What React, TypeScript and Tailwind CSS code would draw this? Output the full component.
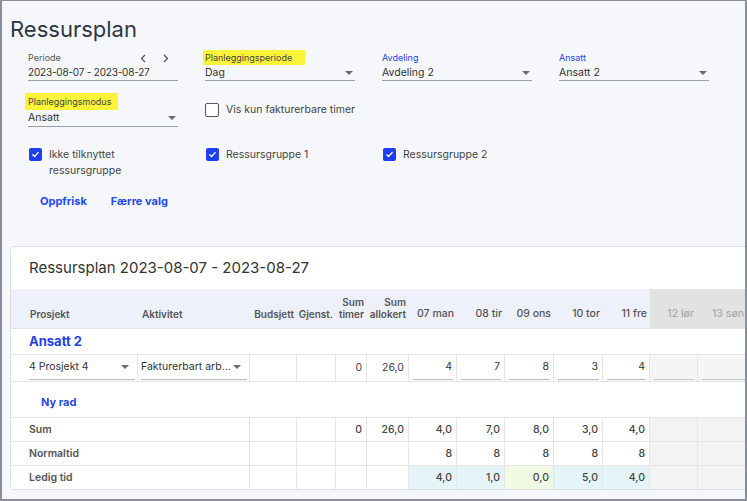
import React from 'react';

const cols = 'grid-cols-[127px_112px_47px_39px_31px_42px_48px_48px_49px_49px_47px_48px_60px]';

function Caret() {
  return (
    <svg width="8" height="4" viewBox="0 0 8 4" className="shrink-0">
      <path d="M0 0h8L4 4z" fill="#6b6b6b" />
    </svg>
  );
}

function Check({ checked }: { checked: boolean }) {
  if (!checked) {
    return <div className="w-[14px] h-[14px] rounded-[2px] border-[1.5px] border-[#5a5a5a] bg-white shrink-0" />;
  }
  return (
    <div className="w-[13px] h-[13px] rounded-[2px] bg-[#1d3fef] flex items-center justify-center shrink-0">
      <svg width="9" height="9" viewBox="0 0 10 10">
        <path d="M2 5.2l2 2 4-4.4" fill="none" stroke="white" strokeWidth="1.4" strokeLinecap="round" strokeLinejoin="round" />
      </svg>
    </div>
  );
}

const days = [
  { h: '07 man', v: '4', sum: '4,0', ledig: '4,0', bg: 'bg-[#e4f4f9]' },
  { h: '08 tir', v: '7', sum: '7,0', ledig: '1,0', bg: 'bg-[#e4f4f9]' },
  { h: '09 ons', v: '8', sum: '8,0', ledig: '0,0', bg: 'bg-[#f2f9e2]' },
  { h: '10 tor', v: '3', sum: '3,0', ledig: '5,0', bg: 'bg-[#e4f4f9]' },
  { h: '11 fre', v: '4', sum: '4,0', ledig: '4,0', bg: 'bg-[#e4f4f9]' },
];

const cell = 'border-r border-b border-[#e3e5e9] flex items-center justify-end pr-[4px] text-[10.5px] text-[#444]';
const wkCell = 'border-r border-b border-[#e3e5e9] bg-[#f3f3f3]';

export default function App() {
  return (
    <div className="w-[747px] h-[501px] overflow-hidden bg-[#f6f7fb] border-l-2 border-t border-r-2 border-b-2 border-[#8a8f9a] font-['Inter',sans-serif] text-[#333]">
      {/* Title */}
      <h1 className="pl-[8px] pt-[14px] h-[49px] text-[22px] leading-[28px] text-[#2e3646]">Ressursplan</h1>

      {/* Row 1 */}
      <div className="flex gap-[27px] pl-[26px]">
        <div className="w-[150px] border-b border-[#9aa0a8]">
          <div className="h-[15px] flex items-center justify-between text-[9px] text-[#555]">
            <span>Periode</span>
            <div className="flex gap-[17px] pr-[9px] pt-[1px]">
              <svg width="6" height="9" viewBox="0 0 6 9"><path d="M5 1L1.5 4.5 5 8" fill="none" stroke="#555" strokeWidth="1.3" /></svg>
              <svg width="6" height="9" viewBox="0 0 6 9"><path d="M1 1l3.5 3.5L1 8" fill="none" stroke="#555" strokeWidth="1.3" /></svg>
            </div>
          </div>
          <div className="h-[15px] flex items-center text-[10px] tracking-[-0.2px] text-[#333]">2023-08-07 - 2023-08-27</div>
        </div>
        <div className="w-[150px] border-b border-[#9aa0a8]">
          <div className="h-[15px] flex items-center">
            <span className="bg-[#fbf43a] text-[9px] text-[#444] px-[2px] -ml-[2px] w-[102px] h-[15px] flex items-center">Planleggingsperiode</span>
          </div>
          <div className="h-[15px] flex items-center justify-between pr-[2px] text-[10.5px]">
            <span>Dag</span>
            <Caret />
          </div>
        </div>
        <div className="w-[150px] border-b border-[#9aa0a8]">
          <div className="h-[15px] flex items-center text-[9px] text-[#2446e6]">Avdeling</div>
          <div className="h-[15px] flex items-center justify-between pr-[2px] text-[10.5px]">
            <span>Avdeling 2</span>
            <Caret />
          </div>
        </div>
        <div className="w-[150px] border-b border-[#9aa0a8]">
          <div className="h-[15px] flex items-center text-[9px] text-[#2446e6]">Ansatt</div>
          <div className="h-[15px] flex items-center justify-between pr-[2px] text-[10.5px]">
            <span>Ansatt 2</span>
            <Caret />
          </div>
        </div>
      </div>

      {/* Row 2 */}
      <div className="flex gap-[27px] pl-[26px] mt-[12px]">
        <div className="w-[150px] border-b border-[#9aa0a8]">
          <div className="h-[17px] flex items-center">
            <span className="bg-[#fbf43a] text-[9px] text-[#444] pl-[3px] -ml-[3px] w-[93px] h-[17px] flex items-center">Planleggingsmodus</span>
          </div>
          <div className="h-[16px] flex items-center justify-between pr-[2px] text-[10.5px]">
            <span>Ansatt</span>
            <Caret />
          </div>
        </div>
        <div className="flex items-center gap-[7px] pt-[10px] self-start h-[24px]">
          <Check checked={false} />
          <span className="text-[10.5px] text-[#444]">Vis kun fakturerbare timer</span>
        </div>
      </div>

      {/* Row 3 */}
      <div className="flex pl-[27px] mt-[20px]">
        <div className="w-[177px] flex gap-[7px]">
          <div className="pt-[1px]"><Check checked /></div>
          <span className="text-[10.5px] leading-[16px] text-[#444] w-[110px]">Ikke tilknyttet ressursgruppe</span>
        </div>
        <div className="w-[177px] flex gap-[7px]">
          <div className="pt-[1px]"><Check checked /></div>
          <span className="text-[10.5px] leading-[16px] text-[#444]">Ressursgruppe 1</span>
        </div>
        <div className="flex gap-[7px]">
          <div className="pt-[1px]"><Check checked /></div>
          <span className="text-[10.5px] leading-[16px] text-[#444]">Ressursgruppe 2</span>
        </div>
      </div>

      {/* Buttons */}
      <div className="flex pl-[26px] mt-[4px] h-[36px] items-center">
        <button className="px-[12px] h-[30px] text-[11px] font-bold text-[#1f4be8]">Oppfrisk</button>
        <button className="px-[12px] h-[30px] text-[11px] font-bold text-[#1f4be8]">Færre valg</button>
      </div>

      {/* Card */}
      <div className="ml-[8px] mt-[27px] w-[800px] bg-white border border-[#dcdfe4] rounded-[4px]">
        <div className="h-[42px] flex items-center pl-[18px] text-[15px] text-[#333]">Ressursplan 2023-08-07 - 2023-08-27</div>

        <div className={`grid ${cols}`}>
          {/* Header */}
          <div className="col-span-6 grid grid-cols-[127px_112px_47px_39px_31px_42px] bg-[#eef1fc] h-[40px] border-b border-[#e3e5e9] text-[10px] font-semibold text-[#555] items-end pb-[8px] leading-[12px]">
            <div className="pl-[19px]">Prosjekt</div>
            <div className="pl-[4px]">Aktivitet</div>
            <div className="text-right pr-[3px]">Budsjett</div>
            <div className="text-right pr-[3px]">Gjenst.</div>
            <div className="text-right pr-[3px]">Sum<br />timer</div>
            <div className="text-right pr-[3px]">Sum<br />allokert</div>
          </div>
          {days.map((d) => (
            <div key={d.h} className="bg-[#eef1fc] h-[40px] border-b border-[#e3e5e9] text-[10.5px] font-medium text-[#555] flex items-end justify-end pb-[8px] pr-[3px] leading-[12px]">{d.h}</div>
          ))}
          <div className="bg-[#e2e2e2] h-[40px] border-b border-[#e3e5e9] text-[10.5px] font-medium text-[#aaa] flex items-end justify-end pb-[8px] pr-[4px] leading-[12px]">12 lør</div>
          <div className="bg-[#e2e2e2] h-[40px] border-b border-[#e3e5e9] text-[10.5px] font-medium text-[#aaa] flex items-end pb-[8px] pl-[14px] leading-[12px]">13 søn</div>

          {/* Ansatt row */}
          <div className="col-span-13 h-[26px] border-b border-[#e3e5e9] flex items-center pl-[18px] text-[13px] font-bold text-[#1f44e2]">Ansatt 2</div>

          {/* Data row */}
          <div className="h-[27px] border-r border-b border-[#e3e5e9] pl-[18px] pr-[2px]">
            <div className="h-[25px] border-b border-[#b8bcc2] flex items-center justify-between pr-[6px] text-[10.5px]">
              <span>4 Prosjekt 4</span>
              <Caret />
            </div>
          </div>
          <div className="h-[27px] border-r border-b border-[#e3e5e9] pl-[3px] pr-[2px]">
            <div className="h-[25px] border-b border-[#b8bcc2] flex items-center justify-between pr-[6px] text-[10.5px]">
              <span className="whitespace-nowrap">Fakturerbart arb...</span>
              <Caret />
            </div>
          </div>
          <div className={cell} />
          <div className={cell} />
          <div className={cell}>0</div>
          <div className={cell}>26,0</div>
          {days.map((d) => (
            <div key={d.h} className="h-[27px] border-r border-b border-[#e3e5e9] pl-[4px] pr-[3px]">
              <div className="h-[25px] border-b border-[#b8bcc2] flex items-center justify-end pr-[1px] text-[10.5px] text-[#333]">{d.v}</div>
            </div>
          ))}
          <div className="h-[27px] border-r border-b border-[#e3e5e9] bg-[#f5f5f5] pl-[4px] pr-[3px]">
            <div className="h-[25px] border-b border-[#c4c7cc]" />
          </div>
          <div className="h-[27px] border-r border-b border-[#e3e5e9] bg-[#f5f5f5] pl-[4px] pr-[3px]">
            <div className="h-[25px] border-b border-[#c4c7cc]" />
          </div>

          {/* Ny rad */}
          <div className="col-span-13 h-[36px] border-b border-[#e3e5e9] flex items-center pt-[6px] pl-[30px] text-[11px] font-bold text-[#1f4be8]">Ny rad</div>

          {/* Sum */}
          <div className="col-span-2 h-[24px] border-r border-b border-[#e3e5e9] flex items-center pl-[18px] text-[10.5px] font-semibold text-[#555]">Sum</div>
          <div className={cell} />
          <div className={cell} />
          <div className={`${cell} font-medium`}>0</div>
          <div className={`${cell} font-medium`}>26,0</div>
          {days.map((d) => (
            <div key={d.h} className={`${cell} font-medium`}>{d.sum}</div>
          ))}
          <div className={wkCell} />
          <div className={wkCell} />

          {/* Normaltid */}
          <div className="col-span-2 h-[24px] border-r border-b border-[#e3e5e9] flex items-center pl-[18px] text-[10.5px] font-semibold text-[#555]">Normaltid</div>
          <div className={cell} />
          <div className={cell} />
          <div className={cell} />
          <div className={cell} />
          {days.map((d) => (
            <div key={d.h} className={`${cell} font-medium`}>8</div>
          ))}
          <div className={wkCell} />
          <div className={wkCell} />

          {/* Ledig tid */}
          <div className="col-span-2 h-[23px] border-r border-[#e3e5e9] flex items-center pl-[18px] text-[10.5px] font-semibold text-[#555]">Ledig tid</div>
          <div className="border-r border-[#e3e5e9]" />
          <div className="border-r border-[#e3e5e9]" />
          <div className="border-r border-[#e3e5e9]" />
          <div className="border-r border-[#e3e5e9]" />
          {days.map((d) => (
            <div key={d.h} className={`h-[23px] border-r border-[#e3e5e9] flex items-center justify-end pr-[4px] text-[10.5px] font-medium text-[#444] ${d.bg}`}>{d.ledig}</div>
          ))}
          <div className="border-r border-[#e3e5e9] bg-[#f3f3f3]" />
          <div className="border-r border-[#e3e5e9] bg-[#f3f3f3]" />
        </div>
      </div>
    </div>
  );
}
